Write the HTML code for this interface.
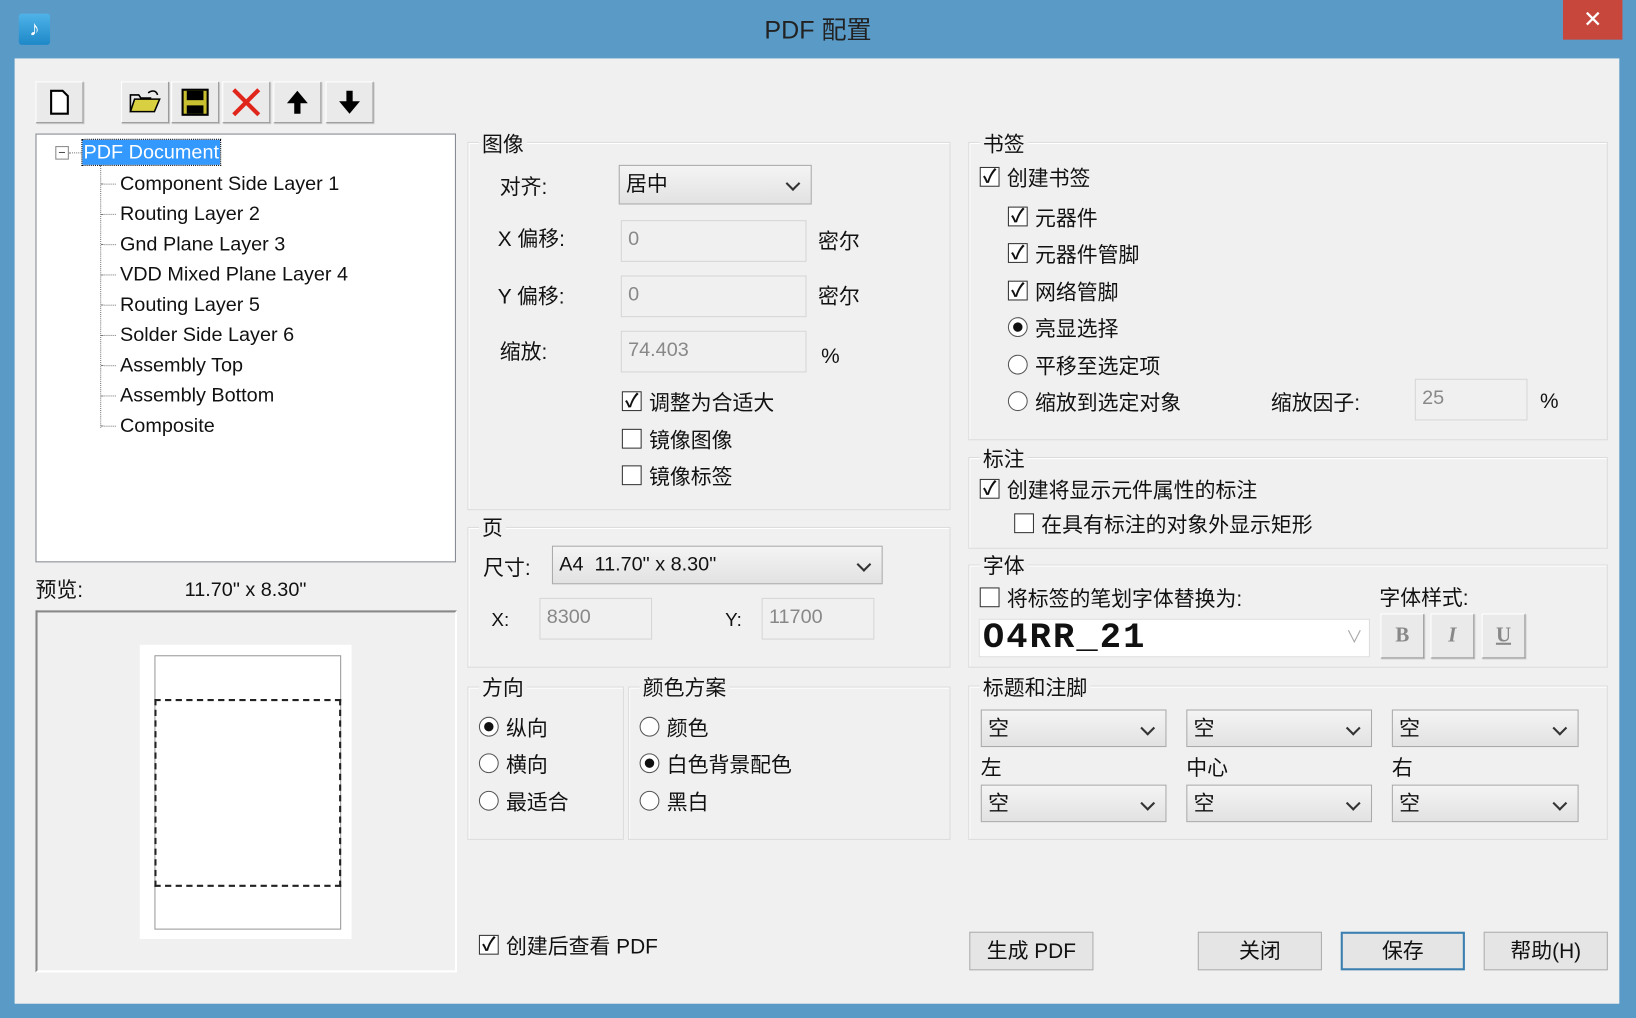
<!DOCTYPE html>
<html><head><meta charset="utf-8"><style>
html,body{margin:0;padding:0;width:1636px;height:1018px;overflow:hidden;background:#5a9ac6}
#w{position:absolute;left:0;top:0;width:1568px;height:976px;transform:scale(1.04337);transform-origin:0 0;background:#5a9ac6;font-family:"Liberation Sans","Noto Sans CJK SC",sans-serif;color:#111}
.a{position:absolute}
.t{position:absolute;font-size:20px;line-height:24px;white-space:nowrap;margin-top:2px}
.client{position:absolute;left:14px;top:56px;width:1538px;height:906px;background:#f0f0f0}
.g{position:absolute;border:1px solid #dcdcdc;box-shadow:inset 1px 1px 0 #fff}
.gl{position:absolute;background:#f0f0f0;font-size:20px;line-height:24px;padding:0 3px;margin-top:2px}
.tb{position:absolute;top:78px;width:44px;height:38px;background:#eaeaea;border:1px solid #fff;border-right-color:#9a9a9a;border-bottom-color:#9a9a9a;box-shadow:1px 1px 0 #c8c8c8}
.cb{position:absolute;width:17px;height:17px;background:#fff;border:1px solid #333;font-size:18px;line-height:17px;text-align:center;font-weight:bold}
.rb{position:absolute;width:19px;height:19px;background:#fff;border:1px solid #555;border-radius:50%;box-sizing:border-box}
.rb.on::after{content:"";position:absolute;left:4px;top:4px;width:9px;height:9px;border-radius:50%;background:#111}
.in{position:absolute;background:#f0f0f0;border:1px solid #d6d6d6;box-sizing:border-box;color:#888;font-size:19px;line-height:36px;padding-left:6px}
.sel{position:absolute;background:linear-gradient(#f4f4f4,#e2e2e2);border:1px solid #aaa;box-sizing:border-box;font-size:20px;line-height:36px;padding-left:6px}
.sel::after{content:"";position:absolute;right:12px;top:12px;width:8px;height:8px;border-right:2px solid #333;border-bottom:2px solid #333;transform:rotate(45deg)}
.btn{position:absolute;top:893px;width:119px;height:37px;box-sizing:border-box;background:#e5e5e5;border:1px solid #adadad;font-size:20px;line-height:37px;text-align:center}
.hl{position:absolute;left:97px;width:14px;border-top:1px dotted #777}
</style></head><body><div id="w">
<div class="a" style="left:18px;top:13px;width:30px;height:30px;background:linear-gradient(#4fb3e8,#1e88c8);border-radius:3px;color:#fff;font-size:20px;line-height:30px;text-align:center;font-weight:bold">♪</div>
<div class="t" style="left:0;width:1568px;text-align:center;top:14px;font-size:24px;line-height:28px;color:#222">PDF 配置</div>
<div class="a" style="left:1498px;top:0;width:57px;height:38px;background:#c7473d;color:#fff;font-size:22px;line-height:38px;text-align:center">✕</div>
<div class="client"></div>

<div class="tb" style="left:34px"><svg width="44" height="38"><path d="M14 8h11l5 5v17H14z" fill="#fff" stroke="#000" stroke-width="2"/></svg></div>
<div class="tb" style="left:116px"><svg width="44" height="38"><path d="M8 28l4-12h24l-5 12z" fill="#d8d040" stroke="#000" stroke-width="1.5"/><path d="M8 28V12h8l2 3h10" fill="none" stroke="#000" stroke-width="1.5"/><path d="M25 10c4-3 8-2 9 2" fill="none" stroke="#000" stroke-width="1.5"/></svg></div>
<div class="tb" style="left:164px"><svg width="44" height="38"><rect x="10" y="7" width="24" height="24" fill="#c8c030" stroke="#000" stroke-width="2"/><rect x="14" y="8" width="16" height="9" fill="#000"/><rect x="14" y="22" width="16" height="8" fill="#000"/></svg></div>
<div class="tb" style="left:213px"><svg width="44" height="38"><path d="M10 7l24 24M34 7L10 31" stroke="#e0251a" stroke-width="4"/></svg></div>
<div class="tb" style="left:262px"><svg width="44" height="38"><path d="M22 8l-10 12h7v10h6V20h7z" fill="#000"/></svg></div>
<div class="tb" style="left:312px"><svg width="44" height="38"><path d="M22 30l-10-12h7V8h6v10h7z" fill="#000"/></svg></div>

<div class="a" style="left:34px;top:128px;width:403px;height:411px;background:#fff;border:1px solid #828790;box-sizing:border-box"></div>
<div class="a" style="left:53px;top:140px;width:11px;height:11px;border:1px solid #888;font-size:12px;line-height:10px;text-align:center;color:#333;background:#fff">−</div>
<div class="a" style="left:66px;top:146px;width:12px;border-top:1px dotted #777"></div>
<div class="a" style="left:96px;top:158px;height:252px;border-left:1px dotted #777"></div>
<div class="hl" style="top:176px"></div><div class="hl" style="top:205px"></div><div class="hl" style="top:234px"></div>
<div class="hl" style="top:263px"></div><div class="hl" style="top:292px"></div><div class="hl" style="top:321px"></div>
<div class="hl" style="top:350px"></div><div class="hl" style="top:379px"></div><div class="hl" style="top:408px"></div>
<div class="a" style="left:79px;top:134px;width:132px;height:24px;background:#3399ff;outline:1px dotted #000"></div>
<div class="t" style="left:80px;top:133px;font-size:19px;color:#fff">PDF Document</div>
<div class="t" style="left:115px;top:163px;font-size:19px">Component Side Layer 1</div>
<div class="t" style="left:115px;top:192px;font-size:19px">Routing Layer 2</div>
<div class="t" style="left:115px;top:221px;font-size:19px">Gnd Plane Layer 3</div>
<div class="t" style="left:115px;top:250px;font-size:19px">VDD Mixed Plane Layer 4</div>
<div class="t" style="left:115px;top:279px;font-size:19px">Routing Layer 5</div>
<div class="t" style="left:115px;top:308px;font-size:19px">Solder Side Layer 6</div>
<div class="t" style="left:115px;top:337px;font-size:19px">Assembly Top</div>
<div class="t" style="left:115px;top:366px;font-size:19px">Assembly Bottom</div>
<div class="t" style="left:115px;top:395px;font-size:19px">Composite</div>

<div class="t" style="left:34px;top:552px">预览:</div>
<div class="t" style="left:177px;top:552px;font-size:19px">11.70" x 8.30"</div>
<div class="a" style="left:34px;top:585px;width:404px;height:347px;border:2px solid #888;border-right-color:#fff;border-bottom-color:#fff;box-sizing:border-box;background:#f0f0f0"></div>
<div class="a" style="left:134px;top:618px;width:203px;height:282px;background:#fff"></div>
<div class="a" style="left:148px;top:628px;width:179px;height:263px;border:1px solid #999;box-sizing:border-box"></div>
<div class="a" style="left:148px;top:670px;width:179px;height:180px;border:2px dashed #222;box-sizing:border-box"></div>

<div class="g" style="left:448px;top:136px;width:461px;height:351px"></div>
<div class="gl" style="left:459px;top:125px">图像</div>
<div class="t" style="left:479px;top:166px">对齐:</div>
<div class="sel" style="left:593px;top:158px;width:185px;height:38px">居中</div>
<div class="t" style="left:477px;top:216px">X 偏移:</div>
<div class="in" style="left:595px;top:211px;width:178px;height:40px">0</div>
<div class="t" style="left:784px;top:218px">密尔</div>
<div class="t" style="left:477px;top:271px">Y 偏移:</div>
<div class="in" style="left:595px;top:264px;width:178px;height:40px">0</div>
<div class="t" style="left:784px;top:271px">密尔</div>
<div class="t" style="left:479px;top:324px">缩放:</div>
<div class="in" style="left:595px;top:317px;width:178px;height:40px">74.403</div>
<div class="t" style="left:787px;top:328px">%</div>
<div class="cb" style="left:596px;top:375px">✓</div><div class="t" style="left:622px;top:373px">调整为合适大</div>
<div class="cb" style="left:596px;top:411px"></div><div class="t" style="left:622px;top:409px">镜像图像</div>
<div class="cb" style="left:596px;top:446px"></div><div class="t" style="left:622px;top:444px">镜像标签</div>

<div class="g" style="left:448px;top:505px;width:461px;height:133px"></div>
<div class="gl" style="left:459px;top:493px">页</div>
<div class="t" style="left:463px;top:531px">尺寸:</div>
<div class="sel" style="left:529px;top:523px;width:317px;height:37px;font-size:19px">A4 &nbsp;11.70" x 8.30"</div>
<div class="t" style="left:471px;top:580px;font-size:18px">X:</div>
<div class="in" style="left:517px;top:573px;width:108px;height:40px">8300</div>
<div class="t" style="left:695px;top:580px;font-size:18px">Y:</div>
<div class="in" style="left:730px;top:573px;width:108px;height:40px">11700</div>

<div class="g" style="left:448px;top:658px;width:148px;height:145px"></div>
<div class="gl" style="left:459px;top:646px">方向</div>
<div class="rb on" style="left:459px;top:687px"></div><div class="t" style="left:485px;top:685px">纵向</div>
<div class="rb" style="left:459px;top:722px"></div><div class="t" style="left:485px;top:720px">横向</div>
<div class="rb" style="left:459px;top:758px"></div><div class="t" style="left:485px;top:756px">最适合</div>
<div class="g" style="left:602px;top:658px;width:307px;height:145px"></div>
<div class="gl" style="left:613px;top:646px">颜色方案</div>
<div class="rb" style="left:613px;top:687px"></div><div class="t" style="left:639px;top:685px">颜色</div>
<div class="rb on" style="left:613px;top:722px"></div><div class="t" style="left:639px;top:720px">白色背景配色</div>
<div class="rb" style="left:613px;top:758px"></div><div class="t" style="left:639px;top:756px">黑白</div>

<div class="cb" style="left:459px;top:896px">✓</div><div class="t" style="left:485px;top:894px">创建后查看 PDF</div>

<div class="g" style="left:928px;top:136px;width:611px;height:284px"></div>
<div class="gl" style="left:939px;top:125px">书签</div>
<div class="cb" style="left:939px;top:160px">✓</div><div class="t" style="left:965px;top:158px">创建书签</div>
<div class="cb" style="left:966px;top:198px">✓</div><div class="t" style="left:992px;top:196px">元器件</div>
<div class="cb" style="left:966px;top:233px">✓</div><div class="t" style="left:992px;top:231px">元器件管脚</div>
<div class="cb" style="left:966px;top:269px">✓</div><div class="t" style="left:992px;top:267px">网络管脚</div>
<div class="rb on" style="left:966px;top:304px"></div><div class="t" style="left:992px;top:302px">亮显选择</div>
<div class="rb" style="left:966px;top:340px"></div><div class="t" style="left:992px;top:338px">平移至选定项</div>
<div class="rb" style="left:966px;top:375px"></div><div class="t" style="left:992px;top:373px">缩放到选定对象</div>
<div class="t" style="left:1218px;top:373px">缩放因子:</div>
<div class="in" style="left:1356px;top:363px;width:108px;height:40px">25</div>
<div class="t" style="left:1476px;top:371px">%</div>

<div class="g" style="left:928px;top:438px;width:611px;height:86px"></div>
<div class="gl" style="left:939px;top:427px">标注</div>
<div class="cb" style="left:939px;top:459px">✓</div><div class="t" style="left:965px;top:457px">创建将显示元件属性的标注</div>
<div class="cb" style="left:972px;top:492px"></div><div class="t" style="left:998px;top:490px">在具有标注的对象外显示矩形</div>

<div class="g" style="left:928px;top:541px;width:611px;height:97px"></div>
<div class="gl" style="left:939px;top:529px">字体</div>
<div class="cb" style="left:939px;top:563px"></div><div class="t" style="left:965px;top:561px">将标签的笔划字体替换为:</div>
<div class="t" style="left:1322px;top:560px">字体样式:</div>
<div class="a" style="left:938px;top:593px;width:375px;height:37px;background:#fff;border:1px solid #ddd;box-sizing:border-box"></div>
<div class="t" style="left:942px;top:591px;font-size:34px;line-height:38px;font-weight:bold;font-family:'Liberation Mono',monospace;letter-spacing:2px">O4RR_21</div>
<div class="t" style="left:1290px;top:598px;color:#aaa;font-size:16px">∨</div>
<div class="tb" style="left:1323px;top:588px;width:40px;height:41px;text-align:center;font:bold 20px/40px 'Liberation Serif',serif;color:#888">B</div>
<div class="tb" style="left:1371px;top:588px;width:40px;height:41px;text-align:center;font:italic bold 20px/40px 'Liberation Serif',serif;color:#888">I</div>
<div class="tb" style="left:1420px;top:588px;width:40px;height:41px;text-align:center;font:bold 20px/40px 'Liberation Serif',serif;color:#888;text-decoration:underline">U</div>

<div class="g" style="left:928px;top:657px;width:611px;height:146px"></div>
<div class="gl" style="left:939px;top:646px">标题和注脚</div>
<div class="sel" style="left:940px;top:680px;width:178px;height:36px">空</div>
<div class="sel" style="left:1137px;top:680px;width:178px;height:36px">空</div>
<div class="sel" style="left:1334px;top:680px;width:179px;height:36px">空</div>
<div class="t" style="left:940px;top:723px">左</div>
<div class="t" style="left:1137px;top:723px">中心</div>
<div class="t" style="left:1334px;top:723px">右</div>
<div class="sel" style="left:940px;top:752px;width:178px;height:36px">空</div>
<div class="sel" style="left:1137px;top:752px;width:178px;height:36px">空</div>
<div class="sel" style="left:1334px;top:752px;width:179px;height:36px">空</div>

<div class="btn" style="left:929px">生成 PDF</div>
<div class="btn" style="left:1148px">关闭</div>
<div class="btn" style="left:1285px;border:2px solid #3c7fb1;line-height:35px">保存</div>
<div class="btn" style="left:1422px">帮助(H)</div>
</div></body></html>
